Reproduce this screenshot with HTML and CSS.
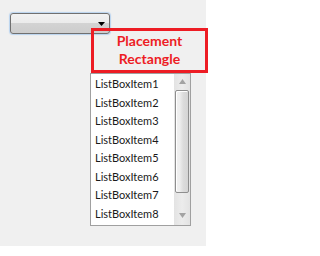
FILE: index.html
```html
<!DOCTYPE html>
<html>
<head>
<meta charset="utf-8">
<link rel="stylesheet" href="styles.css">
</head>
<body>
<div class="stage">
  <div class="combo">
    <svg class="combo-arrow" width="7" height="4" viewBox="0 0 7 4"><path d="M0 0H7L3.5 4Z" fill="#000"/></svg>
  </div>
  <div class="popup">
    <div class="placement">Placement<br>Rectangle</div>
    <div class="listbox">
      <ul class="items">
        <li>ListBoxItem1</li>
        <li>ListBoxItem2</li>
        <li>ListBoxItem3</li>
        <li>ListBoxItem4</li>
        <li>ListBoxItem5</li>
        <li>ListBoxItem6</li>
        <li>ListBoxItem7</li>
        <li>ListBoxItem8</li>
      </ul>
      <div class="scrollbar">
        <svg class="sb-arrow" width="7" height="5" viewBox="0 0 7 5"><path d="M3.5 0L7 5H0Z" fill="#a3a3a3"/></svg>
        <div class="thumb"></div>
        <svg class="sb-arrow sb-down" width="7" height="5" viewBox="0 0 7 5"><path d="M0 0H7L3.5 5Z" fill="#a3a3a3"/></svg>
      </div>
    </div>
  </div>
</div>
</body>
</html>
```

FILE: styles.css
```css
html, body {
  margin: 0;
  padding: 0;
  background: #ffffff;
}

.stage {
  width: 206px;
  height: 246px;
  background: #f0f0f0;
  padding-top: 13px;
  box-sizing: border-box;
}

.combo {
  margin-left: 10px;
  width: 100px;
  height: 21px;
  box-sizing: border-box;
  border: 1px solid #707070;
  border-radius: 3px;
  background: linear-gradient(#f2f2f2 0, #ebebeb 47%, #d3d3d3 48%, #cdcdcd 100%);
  box-shadow: 0 0 1px 1px #b9d3ef;
  display: flex;
  justify-content: flex-end;
  align-items: center;
  padding-right: 4px;
}

.combo-arrow {
  display: block;
}

.popup {
  margin-left: 90px;
  margin-top: -6px;
  display: flex;
  flex-direction: column;
  align-items: flex-start;
}

.placement {
  margin-left: 1px;
  width: 117px;
  height: 45px;
  box-sizing: border-box;
  border: 3px solid #ed1c24;
  color: #ed1c24;
  font-family: Lato, "Open Sans", sans-serif;
  font-weight: bold;
  font-size: 14px;
  line-height: 18px;
  text-align: center;
  padding-top: 1px;
}

.listbox {
  width: 101px;
  height: 153px;
  box-sizing: border-box;
  border: 1px solid #a0a0a0;
  background: #ffffff;
  display: flex;
}

.items {
  list-style: none;
  margin: 0;
  padding: 1px 0 0 4px;
  flex: 1;
  font-family: Lato, "Open Sans", sans-serif;
  font-size: 11px;
  line-height: 18.5px;
  color: #1a1a1a;
}

.scrollbar {
  width: 16px;
  background: linear-gradient(90deg, #e3e3e3, #ececec 50%, #e3e3e3);
  display: flex;
  flex-direction: column;
  align-items: center;
  padding: 5px 0 7px;
  box-sizing: border-box;
}

.sb-arrow {
  display: block;
  flex: none;
}

.sb-down {
  margin-top: auto;
}

.thumb {
  margin-top: 6px;
  width: 14px;
  height: 103px;
  flex: none;
  box-sizing: border-box;
  border: 1px solid #8e8e8e;
  border-radius: 2px;
  background: linear-gradient(90deg, #f0f0f0 0, #eeeeee 30%, #dcdcdc 60%, #d4d4d4 100%);
  box-shadow: inset 1px 1px 0 #ffffff;
}
```
